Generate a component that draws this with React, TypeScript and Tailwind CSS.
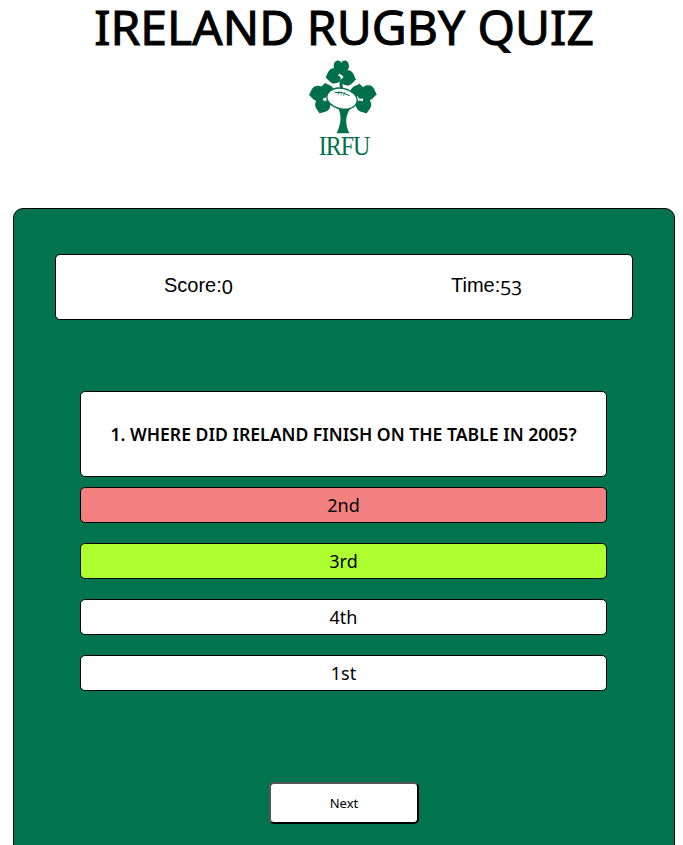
const answers = [
  { label: '2nd', color: 'bg-[#f38080]' },
  { label: '3rd', color: 'bg-[#adff2f]' },
  { label: '4th', color: 'bg-white' },
  { label: '1st', color: 'bg-white' },
];

const heart = 'M0 24 C-5 17 -23 13 -23 -3 C-23 -22 -6 -26 0 -14 C6 -26 23 -22 23 -3 C23 13 5 17 0 24 Z';

function Lobe({ x, y, r }: { x: number; y: number; r: number }) {
  return <path d={heart} transform={`translate(${x} ${y}) rotate(${r})`} />;
}

function Logo() {
  return (
    <svg viewBox="0 15 330 245" className="w-[110px] h-[81.67px]" fill="#006f4b">
      {/* top shamrock */}
      <Lobe x={157} y={52} r={0} />
      <Lobe x={133} y={78} r={80} />
      <Lobe x={178} y={84} r={-80} />
      <path d="M151 90 L159 90 L163 122 L153 122 Z" />
      {/* left shamrock */}
      <Lobe x={83} y={131} r={80} />
      <Lobe x={112} y={122} r={170} />
      <Lobe x={100} y={168} r={20} />
      {/* right shamrock */}
      <Lobe x={240} y={129} r={-80} />
      <Lobe x={208} y={124} r={190} />
      <Lobe x={225} y={168} r={-20} />
      {/* stem */}
      <path d="M146 172 C156 190 160 215 143 250 L181 250 C166 218 170 192 188 170 Z" />
      {/* ball */}
      <ellipse cx="159" cy="146" rx="46" ry="31" transform="rotate(12 159 146)" fill="#ffffff" stroke="#006f4b" strokeWidth="4" />
      <path d="M137 127 Q160 124 182 137" fill="none" stroke="#006f4b" strokeWidth="3" />
      <path d="M150 122 L148 134 M158 124 L156 136 M166 126 L164 138" stroke="#006f4b" strokeWidth="2" />
    </svg>
  );
}

export default function App() {
  return (
    <div className="h-[845px] overflow-hidden bg-white font-['Noto_Sans',sans-serif] text-black">
      <header className="pl-[5px] h-[208px]">
        <h1 className="text-center text-[48px] leading-[54px] font-normal [-webkit-text-stroke:1px_black]">IRELAND RUGBY QUIZ</h1>
        <div className="flex flex-col items-center mt-[1px]">
          <Logo />
          <div className="-mt-[5px] font-['Liberation_Serif',serif] text-[24px] leading-[28px] tracking-[-1px] scale-y-[1.15] text-[#006f4b]">IRFU</div>
        </div>
      </header>

      <div className="ml-[13px] w-[662px] h-[700px] bg-[#00744f] border border-black rounded-[10px] pt-[45px] px-[41px]">
        <div className="h-[66px] bg-white border border-black rounded-[5px] flex items-center pb-[4px] font-['Liberation_Sans',sans-serif] text-[20px]">
          <div className="w-1/2 pl-[108px]">
            Score:<span className="align-[-2px] leading-[0]">0</span>
          </div>
          <div className="w-1/2 pl-[107px]">
            Time:<span className="font-['Open_Sans',sans-serif] oldstyle-nums">53</span>
          </div>
        </div>

        <div className="mt-[71px] ml-[25px] mr-[26px] h-[86px] bg-white border border-black rounded-[5px] flex items-center justify-center font-semibold text-[17.6px]">
          1. WHERE DID IRELAND FINISH ON THE TABLE IN 2005?
        </div>

        <div className="mt-[10px] ml-[25px] mr-[26px] flex flex-col gap-[20px]">
          {answers.map((a) => (
            <div key={a.label} className={`h-[36px] border border-black rounded-[5px] flex items-center justify-center text-[18px] ${a.color}`}>
              {a.label}
            </div>
          ))}
        </div>

        <div className="mt-[91px] flex justify-center">
          <button className="w-[150px] h-[42px] bg-white rounded-[5px] border-2 border-t-[#555555] border-l-[#555555] border-r-black border-b-black text-[13px] pt-[1px]">
            Next
          </button>
        </div>
      </div>
    </div>
  );
}
